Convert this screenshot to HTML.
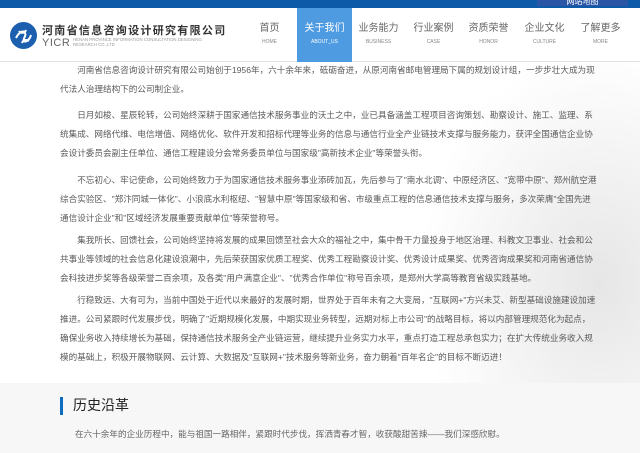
<!DOCTYPE html>
<html><head><meta charset="utf-8"><style>
*{margin:0;padding:0;box-sizing:border-box}
body{width:640px;height:453px;overflow:hidden;background:#fff;font-family:"Liberation Sans","Noto Sans CJK SC",sans-serif;position:relative}
.top{position:absolute;left:0;top:0;width:640px;height:8px;background:#0d5aa8}
.top .tab{position:absolute;left:537px;top:0;width:91px;height:6px;background:#2b56a6;color:#fff;font-size:8px;line-height:4px;text-align:center;overflow:hidden}
.hdr{position:absolute;left:0;top:8px;width:640px;height:54px;background:#fff;border-bottom:1px solid #e2e2e2}
.logo{position:absolute;left:10px;top:14px;width:27px;height:27px}
.cn{position:absolute;left:42px;top:17px;font-size:11px;line-height:12px;font-weight:bold;color:#333;letter-spacing:1.3px;white-space:nowrap}
.yicr{position:absolute;left:42px;top:29px;font-size:11px;line-height:12px;color:#666;letter-spacing:.5px}
.en{position:absolute;left:73px;top:30px;font-size:4.3px;line-height:4.5px;color:#999;white-space:nowrap}
.nav{position:absolute;top:0;width:55px;height:54px;text-align:center}
.nav b{display:block;font-weight:normal;font-size:10px;line-height:12px;color:#666;margin-top:15px}
.nav i{display:block;font-style:normal;font-size:5px;color:#888;margin-top:4px}
.nav.on{background:#4f9be2}
.nav.on b,.nav.on i{color:#fff}
.content{position:absolute;left:0;top:63px;width:640px;height:320px;background:radial-gradient(ellipse 200px 260px at 600px 220px,#e6e6e6,#fff 90%)}
.p{position:absolute;left:60px;width:521px;font-size:8.6px;color:#5a5a5a}
.p div{height:19px;line-height:19px;text-align:justify;text-align-last:justify;white-space:nowrap}
.p div.l{text-align-last:left}
.sec{position:absolute;left:0;top:383px;width:640px;height:70px;background:#f7f7f7}
.bar{position:absolute;left:60px;top:14px;width:3px;height:18px;background:#0d6cc0}
.h{position:absolute;left:73px;top:12px;font-size:14px;color:#222}
.d{position:absolute;left:75px;top:45px;font-size:8.6px;color:#666}
</style></head><body>
<div class="top"><div class="tab">网站地图</div></div>
<div class="hdr">
<svg class="logo" viewBox="0 0 27 27"><circle cx="13.5" cy="13.5" r="13.5" fill="#1c5fae"/><path d="M6 16c3-6 7-8 9-5s-3 6-1 8 6-2 7-6M9 9c2 3 6 2 7-1M12 21c1-3 4-4 7-2" stroke="#fff" stroke-width="2" fill="none"/></svg>
<div class="cn">河南省信息咨询设计研究有限公司</div>
<div class="yicr">YICR</div>
<div class="en">HENAN PROVINCE INFORMATION CONSULTATION DESIGNING<br>RESEARCH CO.,LTD</div>
<div class="nav" style="left:242px"><b>首页</b><i>HOME</i></div>
<div class="nav on" style="left:297px"><b>关于我们</b><i>ABOUT_US</i></div>
<div class="nav" style="left:351px"><b>业务能力</b><i>BUSINESS</i></div>
<div class="nav" style="left:406px"><b>行业案例</b><i>CASE</i></div>
<div class="nav" style="left:461px"><b>资质荣誉</b><i>HONOR</i></div>
<div class="nav" style="left:517px"><b>企业文化</b><i>CULTURE</i></div>
<div class="nav" style="left:573px"><b>了解更多</b><i>MORE</i></div>
</div>
<div class="content"></div>
<div class="p" style="top:61px">
<div>　　河南省信息咨询设计研究有限公司始创于1956年，六十余年来，砥砺奋进，从原河南省邮电管理局下属的规划设计组，一步步壮大成为现</div>
<div class="l">代法人治理结构下的公司制企业。</div></div>
<div class="p" style="top:106px">
<div>　　日月如梭、星辰轮转，公司始终深耕于国家通信技术服务事业的沃土之中，业已具备涵盖工程项目咨询策划、勘察设计、施工、监理、系</div>
<div>统集成、网络代维、电信增值、网络优化、软件开发和招标代理等业务的信息与通信行业全产业链技术支撑与服务能力，获评全国通信企业协</div>
<div class="l">会设计委员会副主任单位、通信工程建设分会常务委员单位与国家级"高新技术企业"等荣誉头衔。</div></div>
<div class="p" style="top:171px">
<div>　　不忘初心、牢记使命，公司始终致力于为国家通信技术服务事业添砖加瓦，先后参与了"南水北调"、中原经济区、"宽带中原"、郑州航空港</div>
<div>综合实验区、"郑汴同城一体化"、小浪底水利枢纽、"智慧中原"等国家级和省、市级重点工程的信息通信技术支撑与服务，多次荣膺"全国先进</div>
<div class="l">通信设计企业"和"区域经济发展重要贡献单位"等荣誉称号。</div></div>
<div class="p" style="top:231px">
<div>　　集我所长、回馈社会，公司始终坚持将发展的成果回馈至社会大众的福祉之中，集中骨干力量投身于地区治理、科教文卫事业、社会和公</div>
<div>共事业等领域的社会信息化建设浪潮中，先后荣获国家优质工程奖、优秀工程勘察设计奖、优秀设计成果奖、优秀咨询成果奖和河南省通信协</div>
<div class="l">会科技进步奖等各级荣誉二百余项，及各类"用户满意企业"、"优秀合作单位"称号百余项，是郑州大学高等教育省级实践基地。</div></div>
<div class="p" style="top:291px">
<div>　　行稳致远、大有可为，当前中国处于近代以来最好的发展时期，世界处于百年未有之大变局，"互联网+"方兴未艾、新型基础设施建设加速</div>
<div>推进。公司紧跟时代发展步伐，明确了"近期规模化发展，中期实现业务转型，远期对标上市公司"的战略目标，将以内部管理规范化为起点，</div>
<div>确保业务收入持续增长为基础，保持通信技术服务全产业链运营，继续提升业务实力水平，重点打造工程总承包实力；在扩大传统业务收入规</div>
<div class="l">模的基础上，积极开展物联网、云计算、大数据及"互联网+"技术服务等新业务，奋力朝着"百年名企"的目标不断迈进！</div></div>
<div class="sec"><div class="bar"></div><div class="h">历史沿革</div><div class="d">在六十余年的企业历程中，能与祖国一路相伴，紧跟时代步伐，挥洒青春才智，收获酸甜苦辣——我们深感欣慰。</div></div>
</body></html>
